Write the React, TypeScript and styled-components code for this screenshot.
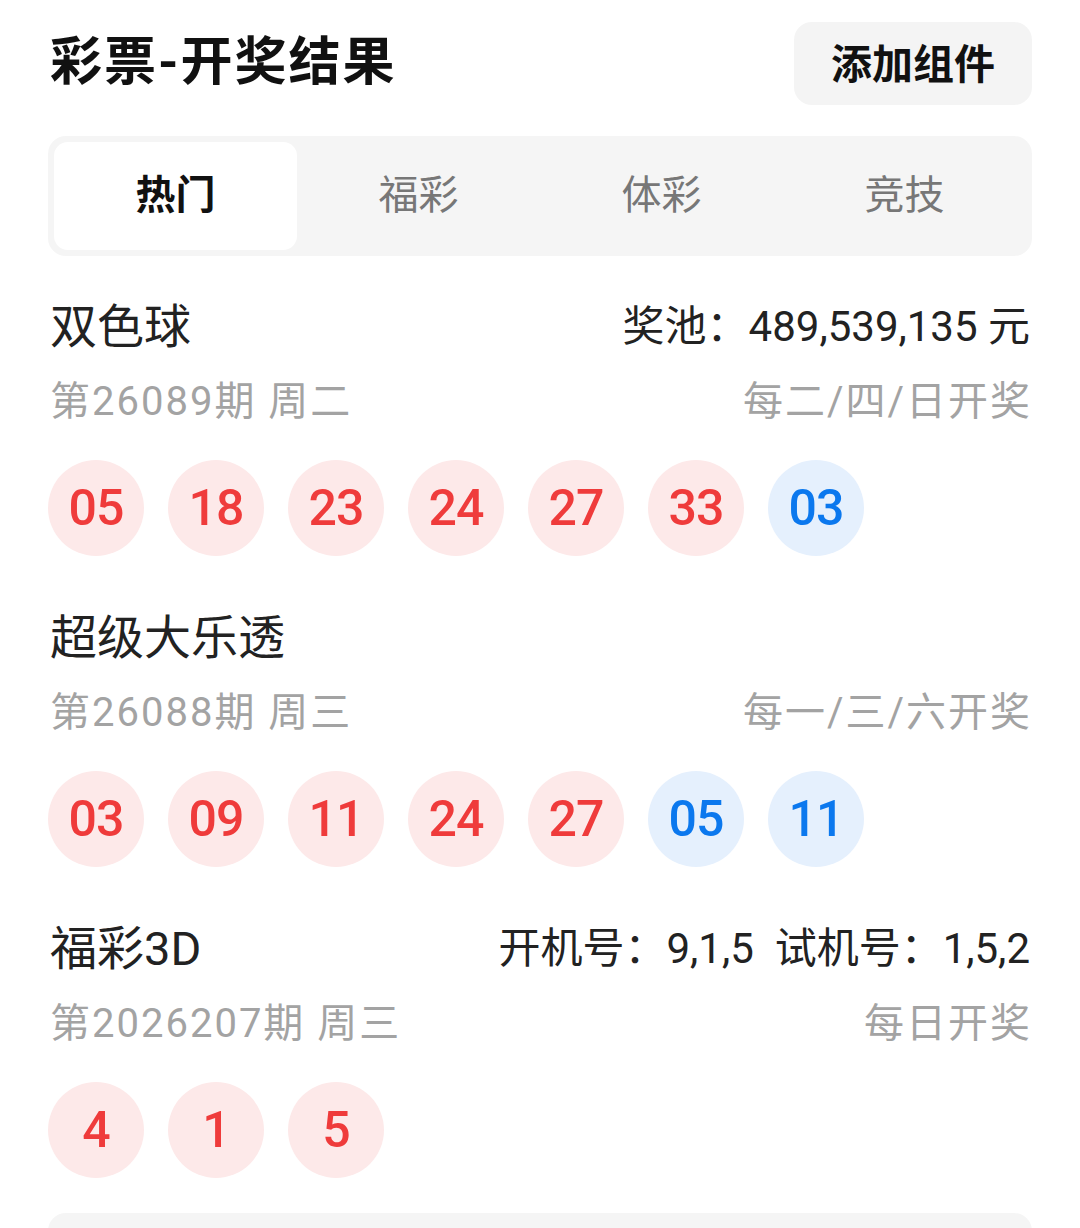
import styled, { createGlobalStyle } from 'styled-components';

const GlobalStyle = createGlobalStyle`
  body {
    margin: 0;
    background: #ffffff;
    font-family: Roboto, 'Noto Sans CJK SC', sans-serif;
  }
`;

const Page = styled.div`
  width: 1080px;
  box-sizing: border-box;
  padding: 22px 48px 0;
  overflow: hidden;
  height: 1228px;
`;

const Header = styled.div`
  display: flex;
  justify-content: space-between;
  align-items: center;
  height: 83px;
`;

const Title = styled.h1`
  margin: 0 0 2px 2px;
  font-size: 52px;
  line-height: 60px;
  font-weight: 700;
  color: #111;
  letter-spacing: 2px;
`;

const AddButton = styled.button`
  width: 238px;
  height: 83px;
  padding: 0 0 6px;
  border: none;
  border-radius: 18px;
  background: #f4f4f4;
  font-family: 'Noto Sans CJK SC', sans-serif;
  font-size: 41px;
  font-weight: 700;
  color: #111;
  cursor: pointer;
`;

const Tabs = styled.div`
  margin-top: 31px;
  height: 120px;
  box-sizing: border-box;
  padding: 6px;
  border-radius: 18px;
  background: #f5f5f5;
  display: grid;
  grid-template-columns: repeat(4, 1fr);
`;

const Tab = styled.div<{ $active?: boolean }>`
  display: flex;
  align-items: center;
  justify-content: center;
  padding-bottom: 8px;
  border-radius: 14px;
  background: ${(p) => (p.$active ? '#ffffff' : 'transparent')};
  color: ${(p) => (p.$active ? '#111' : '#777')};
  font-weight: ${(p) => (p.$active ? 700 : 400)};
  font-size: 40px;
  font-family: 'Noto Sans CJK SC', sans-serif;
`;

const Section = styled.section`
  margin-top: 41px;
  & + & {
    margin-top: 52px;
  }
`;

const Row = styled.div`
  display: flex;
  justify-content: space-between;
  align-items: center;
  padding: 0 2px;
`;

const Name = styled.div`
  font-size: 47px;
  line-height: 60px;
  color: #222;
`;

const Extra = styled.div`
  font-size: 42px;
  line-height: 60px;
  color: #222;
  white-space: pre;
`;

const Meta = styled(Row)`
  margin-top: 19px;
  font-size: 40px;
  line-height: 52px;
  letter-spacing: 2px;
  color: #a3a3a3;
  padding-right: 0;
`;

const Balls = styled.div`
  margin-top: 32px;
  display: flex;
  gap: 24px;
`;

const Ball = styled.div<{ $blue?: boolean }>`
  width: 96px;
  height: 96px;
  border-radius: 50%;
  display: flex;
  align-items: center;
  justify-content: center;
  background: ${(p) => (p.$blue ? '#e5f0fd' : '#fde9e9')};
  color: ${(p) => (p.$blue ? '#0b78ee' : '#ef3b3b')};
  font-family: Roboto, sans-serif;
  font-size: 50px;
  font-weight: 500;
  letter-spacing: -1px;
`;

const NextCard = styled.div`
  margin-top: 35px;
  height: 60px;
  border-radius: 18px;
  background: #f5f5f5;
`;

type Draw = {
  name: string;
  extra: string;
  issue: string;
  schedule: string;
  red: string[];
  blue: string[];
};

const draws: Draw[] = [
  {
    name: '双色球',
    extra: '奖池：489,539,135 元',
    issue: '第26089期 周二',
    schedule: '每二/四/日开奖',
    red: ['05', '18', '23', '24', '27', '33'],
    blue: ['03'],
  },
  {
    name: '超级大乐透',
    extra: '',
    issue: '第26088期 周三',
    schedule: '每一/三/六开奖',
    red: ['03', '09', '11', '24', '27'],
    blue: ['05', '11'],
  },
  {
    name: '福彩3D',
    extra: '开机号：9,1,5  试机号：1,5,2',
    issue: '第2026207期 周三',
    schedule: '每日开奖',
    red: ['4', '1', '5'],
    blue: [],
  },
];

const tabs = ['热门', '福彩', '体彩', '竞技'];

export default function App() {
  return (
    <Page>
      <GlobalStyle />
      <Header>
        <Title>彩票-开奖结果</Title>
        <AddButton>添加组件</AddButton>
      </Header>
      <Tabs>
        {tabs.map((t, i) => (
          <Tab key={t} $active={i === 0}>
            {t}
          </Tab>
        ))}
      </Tabs>
      {draws.map((d) => (
        <Section key={d.name}>
          <Row>
            <Name>{d.name}</Name>
            <Extra>{d.extra}</Extra>
          </Row>
          <Meta>
            <span>{d.issue}</span>
            <span>{d.schedule}</span>
          </Meta>
          <Balls>
            {d.red.map((n, i) => (
              <Ball key={'r' + i}>{n}</Ball>
            ))}
            {d.blue.map((n, i) => (
              <Ball key={'b' + i} $blue>
                {n}
              </Ball>
            ))}
          </Balls>
        </Section>
      ))}
      <NextCard />
    </Page>
  );
}
